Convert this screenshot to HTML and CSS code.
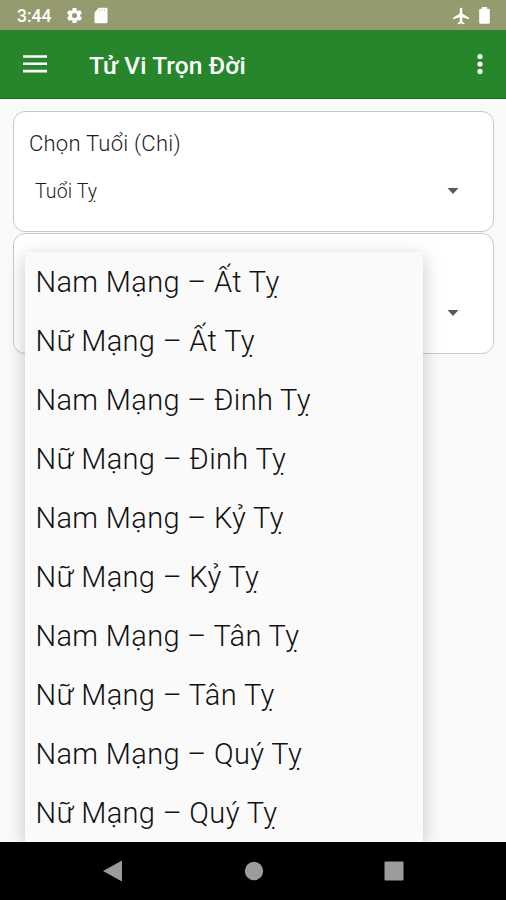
FILE: index.html
```html
<!DOCTYPE html>
<html lang="vi">
<head>
  <meta charset="UTF-8">
  <title>Tử Vi Trọn Đời</title>
  <link rel="stylesheet" href="styles.css">
</head>
<body>

  <div class="status-bar">
    <span class="time">3:44</span>
    <svg class="gear" width="19" height="19" viewBox="0 0 24 24"><path d="M19.14 12.94c.04-.3.06-.61.06-.94 0-.32-.02-.64-.07-.94l2.03-1.58c.18-.14.23-.41.12-.61l-1.92-3.32c-.12-.22-.37-.29-.59-.22l-2.39.96c-.5-.38-1.03-.7-1.62-.94l-.36-2.54c-.04-.24-.24-.41-.48-.41h-3.84c-.24 0-.43.17-.47.41l-.36 2.54c-.59.24-1.13.57-1.62.94l-2.39-.96c-.22-.08-.47 0-.59.22L2.74 8.87c-.12.21-.08.47.12.61l2.03 1.58c-.05.3-.09.63-.09.94s.02.64.07.94l-2.03 1.58c-.18.14-.23.41-.12.61l1.92 3.32c.12.22.37.29.59.22l2.39-.96c.5.38 1.03.7 1.62.94l.36 2.54c.05.24.24.41.48.41h3.84c.24 0 .44-.17.47-.41l.36-2.54c.59-.24 1.13-.56 1.62-.94l2.39.96c.22.08.47 0 .59-.22l1.92-3.32c.12-.22.07-.47-.12-.61l-2.01-1.58zM12 15.2a3.2 3.2 0 1 1 0-6.400 3.200 3.200 0 0 1 0 6.400z"/></svg>
    <svg class="sdcard" width="14" height="17" viewBox="0 0 14 17"><path d="M4.800 .8H12.200a1.300 1.300 0 0 1 1.300 1.300V15a1.300 1.300 0 0 1-1.300 1.300H1.800A1.300 1.300 0 0 1 .5 15V5.500z"/><path class="slots" d="M5.500 2.500v1.600M8 2.500v1.600M10.500 2.500v1.600"/></svg>
    <svg class="plane" width="20" height="20" viewBox="0 0 24 24"><path d="M21.500 16v-2l-8-5V3.500c0-.83-.67-1.500-1.500-1.500s-1.500.67-1.500 1.500V9l-8 5v2l8-2.500V19l-2.500 1.500V22l4-1 4 1v-1.500L13.500 19v-5.500z"/></svg>
    <svg class="battery" width="11" height="17" viewBox="0 0 11 17"><path d="M3 0h5v1.700h1.500A1.300 1.300 0 0 1 10.800 3v12.500a1.300 1.300 0 0 1-1.300 1.300h-8A1.300 1.300 0 0 1 .2 15.500V3a1.300 1.300 0 0 1 1.300-1.300H3z"/></svg>
  </div>

  <header class="toolbar">
    <svg class="menu-icon" width="24" height="18" viewBox="0 0 24 18"><path d="M0 .2h24v2.600H0zM0 7.500h24v2.600H0zM0 14.800h24v2.600H0z"/></svg>
    <h1>Tử Vi Trọn Đời</h1>
    <svg class="more-icon" width="8" height="22" viewBox="0 0 8 22"><circle cx="4" cy="3.500" r="2.600"/><circle cx="4" cy="11" r="2.600"/><circle cx="4" cy="18.400" r="2.600"/></svg>
  </header>

  <main class="content">
    <div class="card">
      <h2>Chọn Tuổi (Chi)</h2>
      <div class="spinner">
        <span>Tuổi Tỵ</span>
        <svg width="12" height="6" viewBox="0 0 12 6"><path d="M.5 0h11L6 6z"/></svg>
      </div>
    </div>

    <div class="card">
      <h2></h2>
      <div class="spinner">
        <span></span>
        <svg width="12" height="6" viewBox="0 0 12 6"><path d="M.5 0h11L6 6z"/></svg>
      </div>
    </div>

    <ul class="dropdown">
      <li>Nam Mạng – Ất Tỵ</li>
      <li>Nữ Mạng – Ất Tỵ</li>
      <li>Nam Mạng – Đinh Tỵ</li>
      <li>Nữ Mạng – Đinh Tỵ</li>
      <li>Nam Mạng – Kỷ Tỵ</li>
      <li>Nữ Mạng – Kỷ Tỵ</li>
      <li>Nam Mạng – Tân Tỵ</li>
      <li>Nữ Mạng – Tân Tỵ</li>
      <li>Nam Mạng – Quý Tỵ</li>
      <li>Nữ Mạng – Quý Tỵ</li>
    </ul>
  </main>

  <nav class="nav-bar">
    <svg width="20" height="22" viewBox="0 0 20 22"><path d="M0 11L19 .5v21z"/></svg>
    <svg width="20" height="20" viewBox="0 0 20 20"><circle cx="10" cy="10" r="9.200"/></svg>
    <svg width="20" height="20" viewBox="0 0 20 20"><rect x=".5" y=".5" width="19" height="19" rx="1"/></svg>
  </nav>

</body>
</html>
```

FILE: styles.css
```css
* {
  box-sizing: border-box;
}
body {
  margin: 0;
  height: 900px;
  display: flex;
  flex-direction: column;
  overflow: hidden;
  font-family: Roboto, "Noto Sans", sans-serif;
  background: #fafafa;
  color: #1c1c1c;
}
svg {
  display: block;
  flex: none;
}

/* Status bar */
.status-bar {
  height: 30px;
  flex: none;
  display: flex;
  align-items: center;
  padding: 1px 16px 0 17px;
  background: #959a6f;
  color: #fff;
  fill: #fff;
}
.time {
  width: 48px;
  font-size: 17.500px;
  font-weight: 500;
}
.sdcard {
  margin-left: 10px;
}
.slots {
  stroke: #c5c8b0;
  stroke-width: 1;
}
.plane {
  margin-left: auto;
  margin-right: 8px;
}

/* Toolbar */
.toolbar {
  height: 69px;
  flex: none;
  display: flex;
  align-items: center;
  padding: 0 22px 0 23px;
  background: #27862b;
  border-bottom: 1px solid #0f7415;
  color: #fff;
  fill: #fff;
}
.toolbar h1 {
  margin: 3px 0 0 42px;
  font-size: 24.500px;
  font-weight: 500;
  letter-spacing: .1px;
  white-space: nowrap;
}
.more-icon {
  margin-left: auto;
}

/* Cards */
.content {
  position: relative;
  flex: 1;
  padding: 12px 12px 0 13px;
  overflow: hidden;
}
.card {
  height: 121px;
  padding: 18px 15px 0;
  background: #fff;
  border: 1.500px solid #c8c8c8;
  border-radius: 12px;
}
.card + .card {
  margin-top: 1px;
}
.card h2 {
  height: 28px;
  margin: 0;
  font-size: 22px;
  font-weight: 350;
  line-height: 28px;
  letter-spacing: .25px;
}
.spinner {
  height: 24px;
  margin-top: 21px;
  padding: 0 19px 0 6px;
  display: flex;
  align-items: center;
  justify-content: space-between;
  font-size: 19.500px;
  font-weight: 350;
  letter-spacing: .1px;
  fill: #5a5a5a;
}

/* Open list */
.dropdown {
  position: absolute;
  top: 153px;
  left: 25px;
  width: 398px;
  margin: 0;
  padding: 0;
  list-style: none;
  background: #fafafa;
  box-shadow: 0 5px 18px rgba(0, 0, 0, .22);
}
.dropdown li {
  height: 59.060px;
  padding-left: 10.500px;
  font-size: 29px;
  font-weight: 350;
  line-height: 60px;
  letter-spacing: .35px;
  color: #111;
  white-space: nowrap;
}

/* Navigation buttons */
.nav-bar {
  height: 58px;
  flex: none;
  display: flex;
  align-items: center;
  justify-content: space-between;
  padding: 0 102px 0 103px;
  background: #000;
  fill: #9c9c9c;
}
```
